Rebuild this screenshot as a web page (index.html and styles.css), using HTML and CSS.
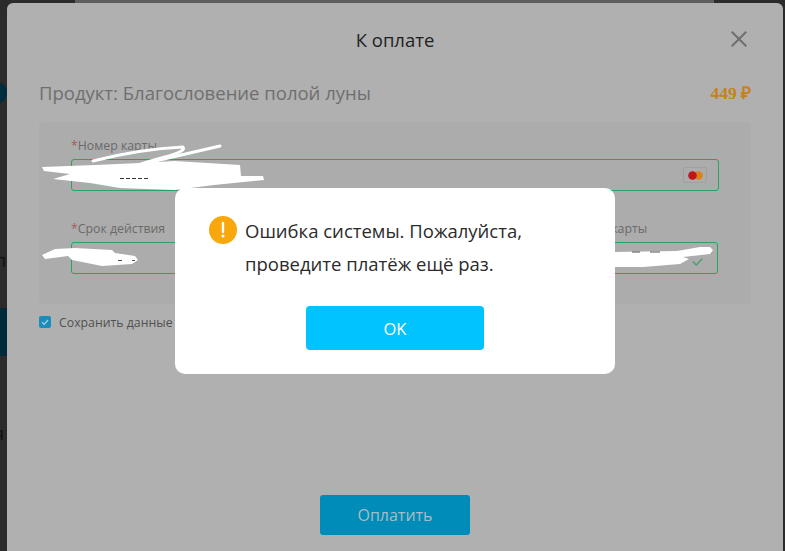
FILE: index.html
```html
<!DOCTYPE html>
<html lang="ru">
<head>
<meta charset="utf-8">
<title>К оплате</title>
<link rel="stylesheet" href="styles.css">
</head>
<body>
<div class="backdrop">
  <div class="top-strip"></div>
  <div class="bg-circle"></div>
  <div class="bg-block"></div>
  <span class="bg-text bg-text-a">п</span>
  <span class="bg-text bg-text-b">я</span>
</div>

<main class="modal">
  <header class="modal-head">
    <h1 class="modal-title">К оплате</h1>
    <svg class="close" width="16" height="16" viewBox="0 0 16 16"><path d="M.7.7l14.6 14.6M15.300.7L.7 15.300" fill="none" stroke="#6f6f6f" stroke-width="2"/></svg>
  </header>

  <div class="product">
    <span class="product-name">Продукт: Благословение полой луны</span>
    <span class="price">449 ₽</span>
  </div>

  <section class="panel">
    <div class="field">
      <label class="label"><i>*</i>Номер карты</label>
      <div class="input">
        <span class="card-chip">
          <svg width="15" height="9" viewBox="0 0 15 9"><circle cx="10.500" cy="4.500" r="4.300" fill="#d9831a"/><circle cx="4.500" cy="4.500" r="4.300" fill="#c0151b"/></svg>
        </span>
      </div>
    </div>
    <div class="row">
      <div class="field">
        <label class="label"><i>*</i>Срок действия</label>
        <div class="input"></div>
      </div>
      <div class="field">
        <label class="label"><i>*</i>Имя держателя карты</label>
        <div class="input input-right">
          <svg class="valid" width="11" height="8" viewBox="0 0 11 8"><path d="M.7 3.500l3.500 3.500L10.300.7" fill="none" stroke="#4ea06e" stroke-width="1.600"/></svg>
        </div>
      </div>
    </div>
  </section>

  <div class="save">
    <span class="checkbox">
      <svg width="12" height="12" viewBox="0 0 12 12"><path d="M3 6.200l2.200 2.200L9 4" fill="none" stroke="#a9d3e3" stroke-width="1.200"/></svg>
    </span>
    <span>Сохранить данные карты</span>
  </div>

  <div class="pay-wrap"><button class="pay">Оплатить</button></div>
</main>

<svg class="scribbles" width="785" height="551" viewBox="0 0 785 551">
  <path fill="none" stroke="#fff" stroke-width="3" stroke-linecap="round" stroke-linejoin="round" d="M93 161Q140 149 183 147Q187 151 165 157Q150 161 138 165L220 146"/>
  <path fill="#fff" d="M42 167L95 165L140 163L175 161L240 165L241 176L263 176L264 180L214 185L175 190L120 188L90 183L53 179L70 174L44 171Z"/>
  <path d="M120 178.500H150" stroke="#333" stroke-width="1" stroke-dasharray="4 2"/>
  <path fill="#fff" d="M42 255L55 249L75 248L112 250L115 253L135 256L138 260L132 264L102 266L72 260L68 256L45 259Z"/>
  <path d="M118 260.500H122M132 260.500H135" stroke="#555" stroke-width="1"/>
  <path fill="#fff" d="M615 252L677 251L700 247L710 247L713 250L710 254L683 257L689 259L680 264L643 267L615 267Z"/>
  <path d="M632 252H640M650 252H660" stroke="#555" stroke-width="1"/>
</svg>

<div class="dialog" role="alertdialog">
  <div class="dialog-body">
    <svg class="alert-icon" width="28" height="28" viewBox="0 0 28 28"><circle cx="14" cy="14" r="14" fill="#f8a70c"/><path d="M14 7v9" stroke="#fff" stroke-width="2.400" stroke-linecap="round"/><circle cx="14" cy="20" r="1.500" fill="#fff"/></svg>
    <p class="dialog-text">Ошибка системы. Пожалуйста, проведите платёж ещё раз.</p>
  </div>
  <button class="ok">OK</button>
</div>
</body>
</html>
```
FILE: styles.css
```css
* { box-sizing: border-box; }

html, body {
  margin: 0;
  height: 100%;
}

body {
  display: flex;
  height: 551px;
  overflow: hidden;
  padding: 3px 2px 0 7px;
  background: #2b2b2b;
  font-family: "Open Sans", sans-serif;
}

.backdrop {
  position: absolute;
  inset: 0;
  overflow: hidden;
}

.top-strip {
  position: absolute;
  left: 75px;
  top: 0;
  width: 639px;
  height: 3px;
  background: #5e5e5e;
}

.bg-circle {
  position: absolute;
  left: -15px;
  top: 82px;
  width: 22px;
  height: 22px;
  border-radius: 50%;
  background: #002c3d;
}

.bg-block {
  position: absolute;
  left: 0;
  top: 308px;
  width: 7px;
  height: 48px;
  background: #002a3a;
}

.bg-text {
  position: absolute;
  font-size: 18px;
  line-height: 20px;
  color: #111;
}

.bg-text-a { left: -5px; top: 250px; }
.bg-text-b { left: -6px; top: 423px; }

.modal {
  position: relative;
  flex: 1;
  display: flex;
  flex-direction: column;
  padding: 0 32px 16px;
  background: #b0b0b0;
  border-radius: 6px 6px 0 0;
}

.modal-head {
  position: relative;
  height: 72px;
  display: flex;
  align-items: center;
  justify-content: center;
}

.modal-title {
  margin: 0;
  font-size: 18.500px;
  font-weight: 400;
  color: #1f1f1f;
}

.close {
  position: absolute;
  right: 4px;
  top: 28px;
}

.product {
  display: flex;
  align-items: center;
  justify-content: space-between;
  height: 24px;
  margin: 5px 0 18px;
}

.product-name {
  font-size: 18.500px;
  color: #6f6f6f;
}

.price {
  font-family: "Liberation Serif", serif;
  font-size: 17.500px;
  font-weight: 700;
  color: #c4821a;
}

.panel {
  height: 182px;
  padding: 15px 32px 0;
  background: #acacac;
  border-radius: 4px;
  display: flex;
  flex-direction: column;
  gap: 29px;
}

.row {
  display: grid;
  grid-template-columns: 1fr 209px;
  gap: 30px;
  padding-right: 1px;
}

.field {
  display: flex;
  flex-direction: column;
  gap: 4px;
}

.label {
  height: 18px;
  font-size: 12.300px;
  line-height: 18px;
  color: #6a6a6a;
  white-space: nowrap;
}

.label i {
  font-style: normal;
  color: #a35a5a;
}

.input {
  height: 32px;
  display: flex;
  align-items: center;
  justify-content: flex-end;
  padding-right: 11px;
  border: 1px solid #27a55f;
  border-radius: 3px;
}

.input-right {
  padding-right: 14px;
}

.valid {
  margin-top: 7px;
}

.card-chip {
  width: 24px;
  height: 16px;
  display: flex;
  align-items: center;
  justify-content: center;
  border: 1px solid #a0a0a0;
  border-radius: 2px;
}

.save {
  display: flex;
  align-items: center;
  gap: 8px;
  height: 18px;
  margin-top: 9px;
  font-size: 12.300px;
  color: #505050;
  white-space: nowrap;
}

.checkbox {
  width: 12px;
  height: 12px;
  display: flex;
  background: #1a8dbb;
  border-radius: 2px;
}

.pay-wrap {
  margin-top: auto;
  display: flex;
  justify-content: center;
}

.pay {
  width: 150px;
  height: 40px;
  border: 0;
  border-radius: 3px;
  background: #008cb8;
  color: #a9bcc3;
  font: 16px "Open Sans", sans-serif;
}

.scribbles {
  position: absolute;
  left: 0;
  top: 0;
}

.dialog {
  position: absolute;
  left: 175px;
  top: 188px;
  width: 440px;
  height: 186px;
  display: flex;
  flex-direction: column;
  align-items: center;
  padding: 26px 34px 24px;
  background: #fff;
  border-radius: 10px;
}

.dialog-body {
  align-self: stretch;
  display: flex;
  gap: 8px;
}

.alert-icon {
  flex: none;
  margin-top: 2px;
}

.dialog-text {
  margin: 0;
  font-size: 18.500px;
  line-height: 33px;
  color: #2b2b2b;
}

.ok {
  width: 178px;
  height: 44px;
  margin-top: auto;
  padding-top: 2px;
  border: 0;
  border-radius: 4px;
  background: #00c3ff;
  color: #fff;
  font: 16.500px "Open Sans", sans-serif;
}
```
